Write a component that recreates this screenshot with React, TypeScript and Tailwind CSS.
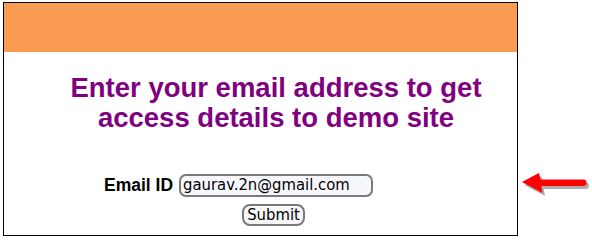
import React from "react";

const ARROW =
  "M2 14 L19 5 Q20 9 20.5 11.5 L63 11.5 Q66.5 11.5 66.5 14.75 Q66.5 18 63 18 L21.5 18 Q21.5 21 22.5 25 Z";

function Arrow() {
  return (
    <svg width="72" height="32" viewBox="0 0 72 32" className="block">
      <g transform="translate(2.5,3)" fill="#a0a0a0" opacity="0.85">
        <path d={ARROW} />
      </g>
      <path d={ARROW} fill="#ff0000" />
    </svg>
  );
}

export default function App() {
  return (
    <div className="w-[592px] h-[241px] bg-white pl-[3px] pt-[2px] flex items-start" style={{ fontFamily: '"Liberation Sans", Arial, sans-serif' }}>
      <div className="w-[515px] h-[234px] border border-black flex flex-col">
        <div className="h-[49px] bg-[#f99b52]" />
        <h1 className="mt-[21px] pl-[31px] text-center text-[27.5px] leading-[30px] font-bold text-[#800080]">
          Enter your email address to get
          <br />
          access details to demo site
        </h1>
        <div className="mt-[41px] ml-[100px] flex items-center">
          <span className="text-[17.5px] font-bold text-black leading-none mr-[6px]">Email ID</span>
          <div
            className="w-[194px] h-[23px] rounded-[7px] border-2 border-[#7a7a7a] bg-[#f7f8fd] flex items-center pl-[2px] text-[16.5px] text-black leading-none"
            style={{ fontFamily: '"DejaVu Sans Condensed", "DejaVu Sans", sans-serif', fontStretch: "condensed" }}
          >
            gaurav.2n@gmail.com
          </div>
        </div>
        <div className="mt-[7px] ml-[238px]">
          <div
            className="w-[63px] h-[22px] rounded-[8px] border-2 border-[#7a7a7a] bg-[#f7f7f7] flex items-center justify-center text-[16.5px] text-black leading-none"
            style={{ fontFamily: '"DejaVu Sans Condensed", "DejaVu Sans", sans-serif', fontStretch: "condensed" }}
          >
            Submit
          </div>
        </div>
      </div>
      <div className="ml-[2px] mt-[166px]">
        <Arrow />
      </div>
    </div>
  );
}
